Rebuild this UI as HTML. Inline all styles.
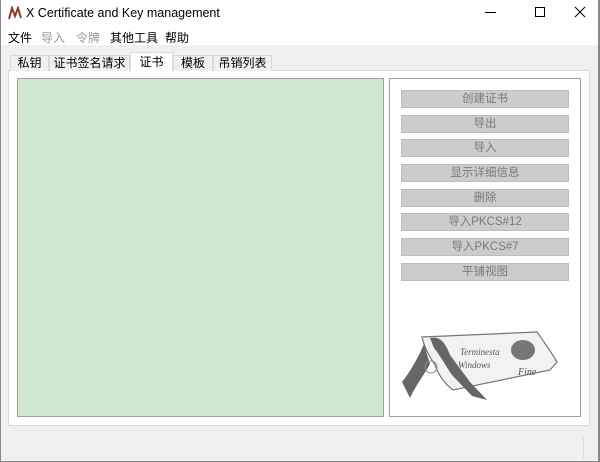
<!DOCTYPE html>
<html><head><meta charset="utf-8"><style>
*{margin:0;padding:0;box-sizing:border-box}
body{width:600px;height:462px;background:#f0f0f0;font-family:"Liberation Sans","Noto Sans CJK SC",sans-serif;font-size:12px;color:#000;position:relative;overflow:hidden}
.abs{position:absolute}
.tb{left:0;top:0;width:600px;height:45px;background:#fff}
.tab{position:absolute;top:55px;height:16px;border:1px solid #d9d9d9;border-bottom:none;background:#f0f0f0;text-align:center;line-height:14px;font-size:12px}
.btn{position:absolute;left:401px;width:168px;height:18px;background:#cccccc;border:1px solid #bdbdbd;color:#7a7a7a;text-align:center;line-height:17px;font-size:11.5px}
</style></head><body>
<div class="abs tb"></div>
<div class="abs" style="left:0;top:0;width:1px;height:462px;background:#888"></div>
<div class="abs" style="right:0;top:0;width:2px;height:462px;background:#888"></div>
<div class="abs" style="left:0;bottom:0;width:600px;height:1px;background:#888"></div>
<svg class="abs" style="left:7px;top:6px" width="16" height="14"><path d="M2 13 L5 2 L8 10 L11 2 L14 12" fill="none" stroke="#8b3a2a" stroke-width="2"/></svg>
<div class="abs" style="left:26px;top:6px;font-size:12.5px">X Certificate and Key management</div>
<div class="abs" style="left:485px;top:12px;width:11px;height:1px;background:#000"></div>
<div class="abs" style="left:535px;top:7px;width:10px;height:10px;border:1px solid #000"></div>
<svg class="abs" style="left:574px;top:6px" width="12" height="12"><path d="M1 1L11 11M11 1L1 11" stroke="#000" stroke-width="1"/></svg>
<div class="abs" style="left:8px;top:29px">文件</div>
<div class="abs" style="left:41px;top:29px;color:#999">导入</div>
<div class="abs" style="left:76px;top:29px;color:#999">令牌</div>
<div class="abs" style="left:110px;top:29px">其他工具</div>
<div class="abs" style="left:165px;top:29px">帮助</div>
<div class="abs" style="left:8px;top:70px;width:582px;height:356px;background:#fff;border:1px solid #d9d9d9"></div>
<div class="tab" style="left:10px;width:39px">私钥</div>
<div class="tab" style="left:49px;width:81px">证书签名请求</div>
<div class="tab" style="left:130px;width:43px;top:52px;height:20px;background:#fff;line-height:18px">证书</div>
<div class="tab" style="left:173px;width:40px">模板</div>
<div class="tab" style="left:213px;width:59px">吊销列表</div>
<div class="abs" style="left:17px;top:78px;width:367px;height:339px;background:#cde6cd;border:1px solid #a0a0a0"></div>
<div class="abs" style="left:389px;top:78px;width:192px;height:339px;background:#fff;border:1px solid #a0a0a0"></div>
<div class="btn" style="top:90px">创建证书</div>
<div class="btn" style="top:115px">导出</div>
<div class="btn" style="top:139px">导入</div>
<div class="btn" style="top:164px">显示详细信息</div>
<div class="btn" style="top:189px">删除</div>
<div class="btn" style="top:213px">导入PKCS#12</div>
<div class="btn" style="top:238px">导入PKCS#7</div>
<div class="btn" style="top:263px">平铺视图</div>
<svg class="abs" style="left:400px;top:330px" width="160" height="75">
<path d="M22 7 L137 2 Q150 20 157 32 L150 40 L53 60 Q40 50 35 35 Q25 20 22 7Z" fill="#f2f2f2" stroke="#777" stroke-width="1.2"/>
<path d="M30 8 C40 6 45 12 50 25 L70 52 L87 70 L72 66 L52 45 C45 35 40 25 34 18Z" fill="#666"/>
<path d="M24 14 C18 28 10 42 2 52 L10 68 C16 55 24 45 30 34Z" fill="#666"/>
<circle cx="31" cy="37" r="6" fill="none" stroke="#888"/>
<ellipse cx="123" cy="20" rx="12" ry="10" fill="#777"/>
<text x="60" y="25" font-size="9" font-family="Liberation Serif,serif" font-style="italic" fill="#555">Terminesta</text>
<text x="58" y="38" font-size="9" font-family="Liberation Serif,serif" font-style="italic" fill="#555">Windows</text>
<text x="118" y="45" font-size="10" font-family="Liberation Serif,serif" font-style="italic" fill="#555">Fine</text>
</svg>
<div class="abs" style="left:583px;top:437px;width:1px;height:22px;background:#ddd"></div>
</body></html>
